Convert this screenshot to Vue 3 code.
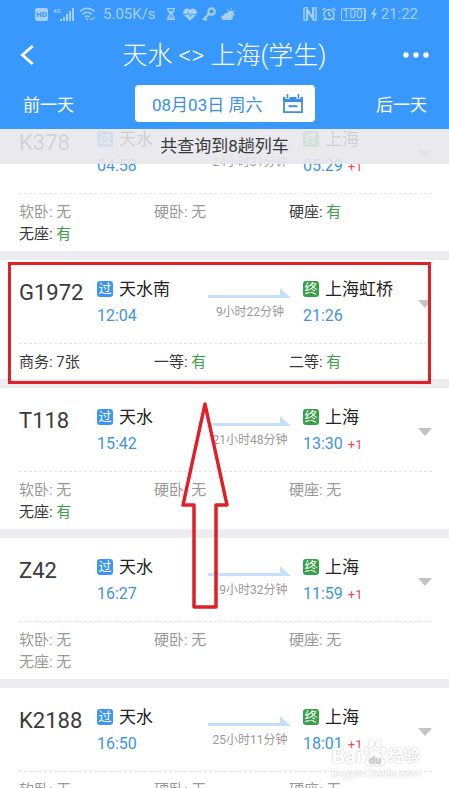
<script setup>
const trains = [
  {
    no: 'K378', from: '天水', dep: '04:58', span: '24小时31分钟', to: '上海', arr: '05:29', next: true,
    seats: [['软卧', '无'], ['硬卧', '无'], ['硬座', '有'], ['无座', '有']],
  },
  {
    no: 'G1972', from: '天水南', dep: '12:04', span: '9小时22分钟', to: '上海虹桥', arr: '21:26', next: false,
    boxed: true,
    seats: [['商务', '7张'], ['一等', '有'], ['二等', '有']],
  },
  {
    no: 'T118', from: '天水', dep: '15:42', span: '21小时48分钟', to: '上海', arr: '13:30', next: true,
    pointer: true,
    seats: [['软卧', '无'], ['硬卧', '无'], ['硬座', '无'], ['无座', '有']],
  },
  {
    no: 'Z42', from: '天水', dep: '16:27', span: '19小时32分钟', to: '上海', arr: '11:59', next: true,
    seats: [['软卧', '无'], ['硬卧', '无'], ['硬座', '无'], ['无座', '无']],
  },
  {
    no: 'K2188', from: '天水', dep: '16:50', span: '25小时11分钟', to: '上海', arr: '18:01', next: true,
    seats: [['软卧', '无'], ['硬卧', '无'], ['硬座', '无'], ['无座', '无']],
  },
]
</script>

<template>
  <div class="screen">
    <header class="top">
      <div class="status">
        <span class="hd">HD</span>
        <span class="cell">
          <span class="net">4G</span>
          <svg width="16" height="13" viewBox="0 0 16 13" fill="currentColor">
            <rect x="0" y="11" width="2" height="2" /><rect x="3" y="9" width="2" height="4" />
            <rect x="6" y="6" width="2" height="7" /><rect x="9" y="3" width="2" height="10" />
            <rect x="12" y="0" width="2" height="13" />
          </svg>
        </span>
        <svg class="wifi" width="17" height="14" viewBox="0 0 17 14" fill="none" stroke="currentColor" stroke-width="1.5">
          <path d="M1 4.6C5.2.2 11.200.2 15.400 4.600M3.500 7.400c2.800-2.900 6.600-2.900 9.400 0M5.900 10.200c1.500-1.500 3.200-1.500 4.600-.2" />
          <path d="M8.200 13.500l-1.600-2h3.200zM11 13l1.300-2.500L13.600 13zM13.500 10.500l1.300 2.500 1.300-2.500z" fill="currentColor" stroke="none" />
        </svg>
        <span class="speed">5.05K/s</span>
        <svg class="glass" width="8" height="12" viewBox="0 0 8 12" fill="none" stroke="currentColor" stroke-width="1.300">
          <path d="M0 .7h8M0 11.300h8M1.200 1v2L3.500 6 1.200 9v2M6.800 1v2L4.500 6l2.300 3v2" />
          <path d="M2 3h4L4 5.500zM2 10.800L4 8l2 2.800z" fill="currentColor" stroke="none" />
        </svg>
        <svg class="heart" width="14" height="13" viewBox="0 0 14 13">
          <path d="M7 12.800L1.200 7.200C-2 3 3-2 7 1.700 11-2 16 3 12.800 7.200z" fill="currentColor" />
          <path d="M1 6.500h3.200l1.200-2.300L7.200 8.600 8.800 5.600l.8.900H13" fill="none" stroke="#3998fc" stroke-width=".9" />
        </svg>
        <svg class="key" width="14" height="14" viewBox="0 0 14 14" fill="none" stroke="currentColor">
          <circle cx="9.500" cy="4.500" r="3.200" stroke-width="2.200" /><path d="M7.200 6.800L1 13M2.500 11.300l2.200 2.200" stroke-width="2.200" />
        </svg>
        <svg width="14" height="13" viewBox="0 0 14 13" fill="currentColor">
          <path d="M3 12C-.5 12-.5 7.500 2.600 7.300 3 4.500 7 4 8.200 6.500c2.800-.5 4 1 3.600 3C11.500 11.500 10.500 12 9 12z" />
          <circle cx="9.500" cy="6" r="3.200" />
          <path d="M9.600 0h1v2h-1zM5.700 1.900l.8-.7 1.300 1.400-.8.700zM12.400 2.700l1-1 .6.700-1 1zM12.800 6h1.200v1h-1.200z" />
        </svg>
        <span class="spring"></span>
        <svg class="nfc" width="14" height="14" viewBox="0 0 14 14">
          <path d="M1.500.5H5M1 1v12h4M9 1h4v12H9.500" fill="none" stroke="currentColor" stroke-width="1.500" />
          <path d="M3 13V2.200L4.500 1 9 8V1h2.200v11L9.700 13 5.200 6.200V13z" fill="currentColor" />
        </svg>
        <svg class="alarm" width="14" height="14" viewBox="0 0 14 14" fill="none" stroke="currentColor" stroke-width="1.500">
          <circle cx="7" cy="7.600" r="5" /><path d="M7 4.500v3.300l2 1.400M.6 3.300L3.400.9M13.400 3.300L10.600.9M3 11.500l-1.500 1.700M11 11.500l1.500 1.700" />
        </svg>
        <span class="battery">100</span>
        <svg class="bolt" width="6" height="12" viewBox="0 0 6 12" fill="currentColor"><path d="M4 0L0 6.500h2.400L1.300 12 6 5H3.400L5 0z" /></svg>
        <span class="clock">21:22</span>
      </div>

      <div class="titlebar">
        <button class="icon-btn" aria-label="返回">
          <svg width="14" height="20" viewBox="0 0 14 20" fill="none" stroke="#fff" stroke-width="2.800"><path d="M12.700 1L2.400 10l10.300 9" /></svg>
        </button>
        <h1>天水 &lt;&gt; 上海(学生)</h1>
        <button class="icon-btn more" aria-label="更多">
          <svg width="26" height="6" viewBox="0 0 26 6" fill="#fff"><circle cx="3" cy="3" r="2.700" /><circle cx="13" cy="3" r="2.700" /><circle cx="23" cy="3" r="2.700" /></svg>
        </button>
      </div>

      <nav class="days">
        <button class="day">前一天</button>
        <button class="date">
          <span>08月03日 周六</span>
          <svg width="20" height="20" viewBox="0 0 20 20" fill="none" stroke="#3b8fe4">
            <path d="M1 3v15.200h18V3" stroke-width="1.800" /><path d="M0 5.500h20" stroke-width="5" />
            <path d="M4.500 0v5M15.500 0v5" stroke="#fff" stroke-width="4" /><path d="M4.500 0v4.500M15.500 0v4.500" stroke-width="1.600" />
            <path d="M5.500 12.200h9" stroke-width="2" />
          </svg>
        </button>
        <button class="day">后一天</button>
      </nav>
    </header>

    <main class="results">
      <p class="notice">共查询到8趟列车</p>
      <div class="list">
        <article v-for="t in trains" :key="t.no" class="card">
          <div class="trip">
            <h2>{{ t.no }}</h2>
            <div class="stop from">
              <div class="station"><i class="badge pass">过</i>{{ t.from }}</div>
              <div class="time">{{ t.dep }}</div>
            </div>
            <div class="span">
              <svg width="84" height="10" viewBox="0 0 84 10" fill="#c4e0fd"><path d="M0 7h72V0l11 10H0z" /></svg>
              <span>{{ t.span }}</span>
            </div>
            <div class="stop to">
              <div class="station"><i class="badge end">终</i>{{ t.to }}</div>
              <div class="time">{{ t.arr }}<small v-if="t.next">+1</small></div>
            </div>
            <svg class="caret" width="14" height="8" viewBox="0 0 14 8"><path d="M0 0h14L7 8z" fill="#c3c3c3" /></svg>
          </div>
          <ul class="seats">
            <li v-for="s in t.seats" :key="s[0]" :class="{ none: s[1] === '无' }">
              {{ s[0] }}: <b :class="{ ok: s[1] === '有' }">{{ s[1] }}</b>
            </li>
          </ul>
          <div v-if="t.boxed" class="box"></div>
          <svg v-if="t.pointer" class="pointer" width="50" height="212" viewBox="0 0 50 212" fill="none" stroke="#e01f27" stroke-width="3.500">
            <path d="M25 6L3 107h11v102h22V107h11z" stroke-linejoin="round" />
          </svg>
        </article>
      </div>
    </main>

    <div class="mark">
      <div class="brand">
        <span>Bai</span>
        <svg width="26" height="30" viewBox="0 0 24 30">
          <g fill="#fff" stroke="#dcdcdc" stroke-width=".8">
            <ellipse cx="3.500" cy="13" rx="3" ry="4" /><ellipse cx="8.500" cy="5.500" rx="3" ry="4.300" />
            <ellipse cx="15.500" cy="5.500" rx="3" ry="4.300" /><ellipse cx="20.500" cy="12.500" rx="3" ry="4" />
            <path d="M12 12c4 0 5 5 8.500 8 3 3 1.500 8-3 8.300-4 0-7-.6-11 0C2 28.500.5 23 3.500 20 7 17 8 12 12 12z" />
          </g>
          <text x="12" y="26" text-anchor="middle" font-size="11" font-weight="700" font-family="Roboto, sans-serif" fill="#ccc">du</text>
        </svg>
        <span class="cn">经验</span>
      </div>
      <div class="site">jingyan.baidu.com</div>
    </div>
  </div>
</template>

<style>
body { overflow: hidden; }
</style>

<style scoped>
.screen {
  position: relative;
  display: flex;
  flex-direction: column;
  height: 100vh;
  overflow: hidden;
  background: #ededf1;
  color: #3a3a3a;
  font-family: Roboto, "Noto Sans CJK SC", sans-serif;
  font-weight: 400;
}
button { border: 0; padding: 0; background: none; font: inherit; color: inherit; }
svg { display: block; flex: none; }
h1, h2, p, ul { margin: 0; padding: 0; font-weight: 400; }

.top { position: relative; z-index: 2; flex: none; background: #3998fc; color: #fff; }
.status {
  display: flex;
  align-items: center;
  height: 28px;
  padding: 0 31px 0 35px;
  color: #a6d0fb;
  font-size: 15px;
}
.hd {
  width: 13px;
  line-height: 13px;
  margin-right: 5px;
  border-radius: 2px;
  background: #a6d0fb;
  color: #3998fc;
  font-size: 8px;
  font-weight: 700;
  text-align: center;
}
.cell { display: flex; align-items: flex-start; margin-right: 3px; }
.net { width: 7px; font-size: 6px; line-height: 6px; font-weight: 700; }
.wifi { margin-right: 7px; }
.speed { margin-right: 11px; }
.glass { margin-right: 8px; }
.heart, .key { margin-right: 5px; }
.spring { flex: 1; }
.nfc, .alarm { margin-right: 5px; }
.battery {
  width: 22px;
  margin-right: 5px;
  border: 1px solid #a6d0fb;
  border-right-width: 2px;
  border-radius: 2px;
  font-size: 12px;
  line-height: 11px;
  text-align: center;
}
.bolt { margin-right: 4px; }

.titlebar { display: flex; align-items: center; justify-content: space-between; height: 54px; padding: 0 20px; }
.icon-btn { display: flex; width: 28px; height: 40px; align-items: center; }
.more { justify-content: flex-end; }
h1 { padding-top: 2px; font-size: 25px; line-height: 36px; font-weight: 300; }

.days { display: flex; align-items: center; justify-content: space-between; height: 43px; padding: 0 22px 4px 23px; font-size: 17px; }
.date {
  display: flex;
  align-items: center;
  justify-content: space-between;
  width: 180px;
  height: 37px;
  padding: 0 12px 0 17px;
  box-sizing: border-box;
  border-radius: 4px;
  background: #fff;
  color: #3b8fe4;
}

.results { position: relative; flex: 1; min-height: 0; }
.notice {
  position: absolute;
  z-index: 1;
  top: 0;
  left: 0;
  right: 0;
  height: 35px;
  line-height: 35px;
  background: rgba(231, 231, 236, 0.88);
  font-size: 17px;
  text-align: center;
}
.list { display: flex; flex-direction: column; gap: 9px; margin-top: -19px; }
.card { position: relative; background: #fff; }
.trip {
  display: flex;
  height: 83px;
  margin: 0 17px 0 19px;
  border-bottom: 1px dashed #e4e4e4;
}
h2 { width: 78px; padding-top: 17px; font-size: 22px; line-height: 32px; }
.stop { padding-top: 17px; }
.from { flex: 1; }
.to { width: 115px; margin-left: 11px; }
.station { display: flex; align-items: center; gap: 6px; height: 24px; font-size: 17px; line-height: 24px; color: #222; white-space: nowrap; }
.badge {
  width: 16px;
  height: 16px;
  border-radius: 3px;
  color: #fff;
  font-size: 13px;
  line-height: 16px;
  font-style: normal;
  text-align: center;
}
.pass { background: #3d97f2; }
.end { background: #35a046; }
.time { margin-top: 3px; font-size: 16px; line-height: 24px; color: #3f93e4; }
.time small { margin-left: 5px; font-size: 13px; color: #e2525f; }
.span { width: 84px; padding-top: 28px; font-size: 12px; line-height: 16px; color: #999; text-align: center; white-space: nowrap; }
.span span { display: block; margin-top: 6px; }
.caret { margin-top: 40px; }

.seats {
  display: grid;
  grid-template-columns: repeat(3, 1fr);
  padding: 7px 25px 6px 19px;
  list-style: none;
  font-size: 15px;
  line-height: 22px;
}
.seats b { font-weight: 400; }
.seats .none { color: #999; }
.seats .ok { color: #3da049; }

.box { position: absolute; z-index: 1; top: 2px; left: 8px; right: 18px; bottom: -5px; border: 3px solid #e32028; }
.pointer { position: absolute; z-index: 1; top: 10px; left: 180px; }

.mark {
  position: absolute;
  z-index: 3;
  right: 28px;
  bottom: 8px;
  color: #fff;
  text-shadow: 0 0 2px #bbb;
}
.brand { display: flex; align-items: flex-end; font-size: 21px; line-height: 24px; font-weight: 700; }
.brand .cn { font-size: 16px; }
.site { font-size: 11px; line-height: 12px; }
</style>
